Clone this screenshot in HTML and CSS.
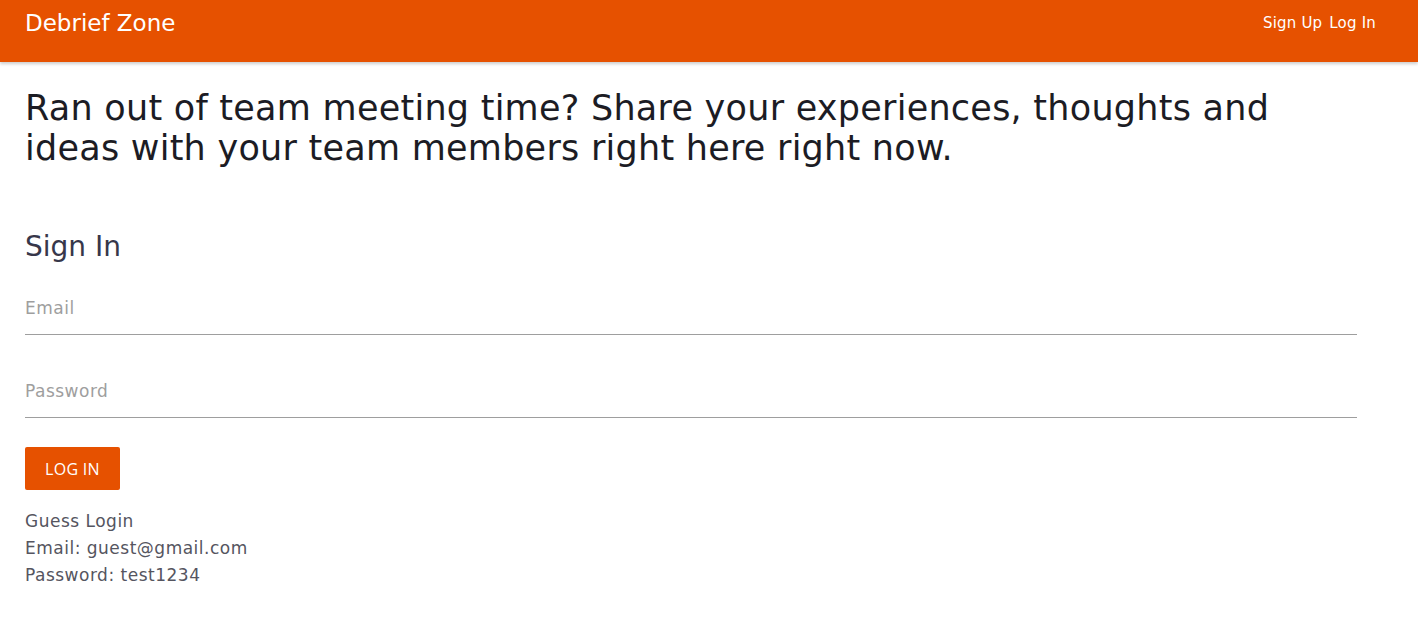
FILE: index.html
```html
<!DOCTYPE html>
<html>
<head>
<meta charset="utf-8">
<link rel="stylesheet" href="styles.css">
</head>
<body>
<header class="navbar">
  <a class="brand" href="#">Debrief Zone</a>
  <nav class="nav-links">
    <a href="#">Sign Up</a>
    <a href="#">Log In</a>
  </nav>
</header>
<main class="container">
  <h1 class="tagline">Ran out of team meeting time? Share your experiences, thoughts and ideas with your team members right here right now.</h1>
  <section class="signin">
    <h2 class="signin-title">Sign In</h2>
    <form class="form">
      <div class="field"><input type="email" placeholder="Email"></div>
      <div class="field"><input type="password" placeholder="Password"></div>
      <button type="button" class="btn">LOG IN</button>
    </form>
    <div class="guest">
      <div>Guess Login</div>
      <div>Email: guest@gmail.com</div>
      <div>Password: test1234</div>
    </div>
  </section>
</main>
</body>
</html>
```
FILE: styles.css
```css
* { box-sizing: border-box; }
body {
  margin: 0;
  font-family: "DejaVu Sans", "Noto Sans", sans-serif;
  background: #fff;
  color: #212121;
}
.navbar {
  height: 62px;
  background: #e65100;
  display: flex;
  align-items: center;
  justify-content: space-between;
  padding: 0 42px 16px 25px;
  box-shadow: 0 2px 3px rgba(0,0,0,0.2);
}
.brand {
  color: #fff;
  text-decoration: none;
  font-size: 23px;
}
.nav-links {
  display: flex;
  gap: 7px;
}
.nav-links a {
  color: #fff;
  text-decoration: none;
  font-size: 15px;
  letter-spacing: 0.2px;
}
.container {
  padding: 0 61px 0 25px;
}
.tagline {
  margin: 26px 0 0;
  font-size: 35px;
  font-weight: 400;
  line-height: 40px;
  letter-spacing: 0.25px;
  color: #1c1c24;
  max-width: 1290px;
}
.signin-title {
  margin: 59px 0 0;
  font-size: 28px;
  font-weight: 400;
  line-height: 40px;
  color: #37374a;
}
.form { margin-top: 14px; }
.field {
  margin-bottom: 29px;
}
.field input {
  display: block;
  width: 100%;
  border: none;
  border-bottom: 1px solid #9e9e9e;
  height: 54px;
  padding: 0;
  font-family: inherit;
  font-size: 17px;
  letter-spacing: 0.5px;
  outline: none;
  background: transparent;
}
.field input::placeholder { color: #9e9e9e; }
.btn {
  margin-top: 0;
  display: block;
  height: 43px;
  padding: 0 20px;
  border: none;
  border-radius: 2px;
  background: #e65100;
  color: #fff;
  font-family: "Open Sans", sans-serif;
  font-size: 16px;
  letter-spacing: 0.3px;
}
.guest {
  margin-top: 18px;
  font-size: 17px;
  letter-spacing: 0.5px;
  line-height: 27px;
  color: #555560;
}
```
